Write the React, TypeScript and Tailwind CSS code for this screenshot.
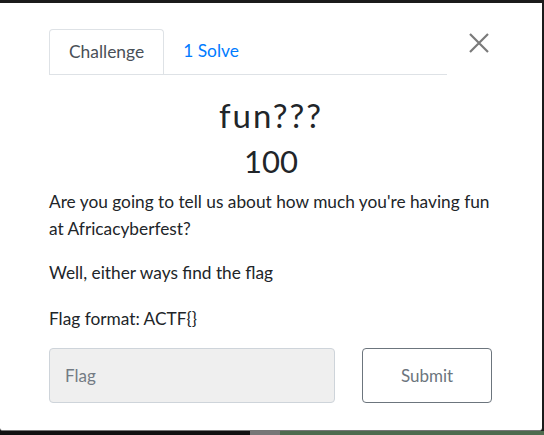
import React from "react";

export default function App() {
  return (
    <div
      className="w-[544px] h-[435px] bg-[#1b1b1b] flex flex-col overflow-hidden"
      style={{ fontFamily: "Lato, 'Liberation Sans', sans-serif" }}
    >
      <div className="h-[3px] shrink-0" />
      <div className="relative w-[542px] h-[428px] bg-white rounded-b-[3px] border-b border-[#777] px-[49px] pt-[26px]">
        <button className="absolute right-[51px] top-[28px] text-[#7a7a7a]">
          <svg width="24" height="24" viewBox="0 0 24 24" fill="none" stroke="currentColor" strokeWidth="2.2">
            <path d="M3 3L21 21M21 3L3 21" />
          </svg>
        </button>
        <div className="w-[398px] flex border-b border-[#dee2e6] text-[17.4px]">
          <div className="px-[19px] h-[45px] flex items-center border border-b-0 border-[#dee2e6] rounded-t-[4px] bg-white text-[#495057] -mb-px">
            Challenge
          </div>
          <div className="px-[19px] h-[45px] flex items-center text-[#007bff]">1 Solve</div>
        </div>
        <h2 className="text-center text-[33px] leading-[40px] tracking-[2px] text-[#212529] mt-[20px]">fun???</h2>
        <h3 className="text-center text-[31px] leading-[40px] text-[#212529] mt-[6px]">100</h3>
        <div className="text-[17.3px] leading-[27px] text-[#212529] mt-[7px] w-[450px]">
          <p>Are you going to tell us about how much you're having fun at Africacyberfest?</p>
          <p className="mt-[17px]">Well, either ways find the flag</p>
          <p className="mt-[19px]">Flag format: ACTF{"{}"}</p>
        </div>
        <div className="flex gap-[27px] mt-[16px]">
          <input
            placeholder="Flag"
            className="w-[286px] h-[55px] bg-[#efefef] border border-[#ced4da] rounded-[4px] px-[15px] text-[17px] placeholder:text-[#737b84] outline-none"
          />
          <button className="w-[130px] h-[55px] border border-[#6c757d] rounded-[4px] text-[17px] text-[#6c757d] bg-white">
            Submit
          </button>
        </div>
      </div>
      <div className="flex h-[4px] mt-auto">
        <div className="w-[250px] bg-[#111]" />
        <div className="w-[30px] bg-[#777]" />
        <div className="flex-1 bg-[#4e6b4e]" />
      </div>
    </div>
  );
}
